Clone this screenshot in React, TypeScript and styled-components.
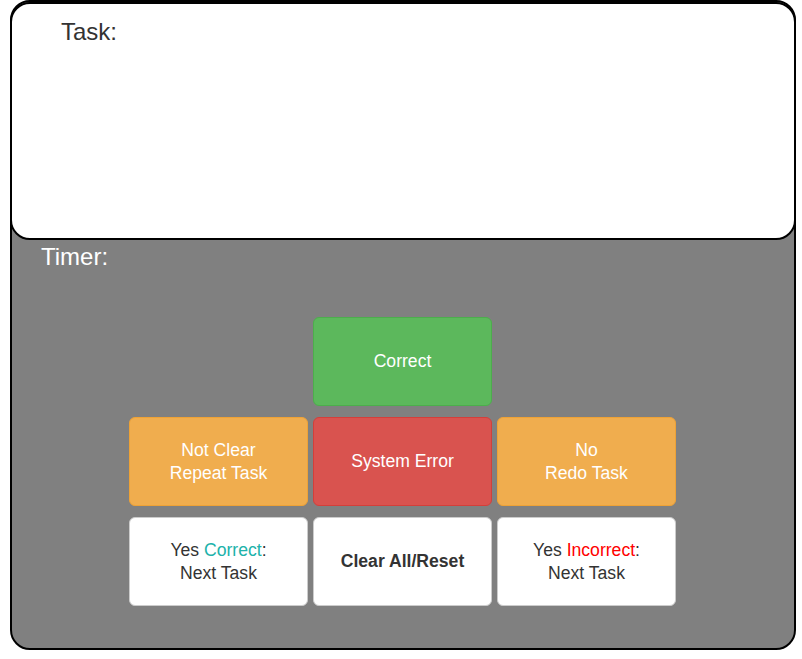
import React from "react";
import styled, { createGlobalStyle, css } from "styled-components";

const Global = createGlobalStyle`
  html, body { margin: 0; padding: 0; background: #fff; }
  body { font-family: "Liberation Sans", Arial, sans-serif; }
`;

const Frame = styled.div`
  box-sizing: border-box;
  margin-left: 10px;
  width: 786px;
  height: 650px;
  border: 2px solid #000;
  border-radius: 20px;
  background: #808080;
  display: flex;
  flex-direction: column;
`;

const TaskBox = styled.div`
  box-sizing: border-box;
  margin: 0 -2px;
  height: 238px;
  border: 2px solid #000;
  border-radius: 20px;
  background: #fff;
  padding: 14px 0 0 49px;
`;

const Label = styled.div<{ $light?: boolean }>`
  font-size: 24px;
  line-height: 27px;
  color: ${(p) => (p.$light ? "#fff" : "#333")};
`;

const TimerRow = styled.div`
  margin-top: 3px;
  padding-left: 29px;
`;

const Grid = styled.div`
  margin: 47px 0 0 117px;
  display: grid;
  grid-template-columns: repeat(3, 179px);
  grid-auto-rows: 89px;
  column-gap: 5px;
  row-gap: 11px;
`;

type Variant = "success" | "warning" | "danger" | "default";

const variants: Record<Variant, ReturnType<typeof css>> = {
  success: css`
    background: #5cb85c;
    border-color: #4cae4c;
    color: #fff;
  `,
  warning: css`
    background: #f0ad4e;
    border-color: #eea236;
    color: #fff;
  `,
  danger: css`
    background: #d9534f;
    border-color: #d43f3a;
    color: #fff;
  `,
  default: css`
    background: #fff;
    border-color: #ccc;
    color: #333;
  `,
};

const Btn = styled.button<{ $variant: Variant; $col?: number; $bold?: boolean }>`
  box-sizing: border-box;
  grid-column: ${(p) => p.$col ?? "auto"};
  border: 1px solid;
  border-radius: 6px;
  font-family: "Liberation Sans", Arial, sans-serif;
  font-size: 17.6px;
  line-height: 23px;
  font-weight: ${(p) => (p.$bold ? 700 : 400)};
  text-align: center;
  padding: 0 8px;
  cursor: pointer;
  ${(p) => variants[p.$variant]}
`;

const Teal = styled.span`
  color: #20b2aa;
`;
const Red = styled.span`
  color: #ff0000;
`;

export default function App() {
  return (
    <>
      <Global />
      <Frame>
        <TaskBox>
          <Label>Task:</Label>
        </TaskBox>
        <TimerRow>
          <Label $light>Timer:</Label>
        </TimerRow>
        <Grid>
          <Btn $variant="success" $col={2}>Correct</Btn>
          <Btn $variant="warning" $col={1}>
            Not Clear
            <br />
            Repeat Task
          </Btn>
          <Btn $variant="danger">System Error</Btn>
          <Btn $variant="warning">
            No
            <br />
            Redo Task
          </Btn>
          <Btn $variant="default">
            Yes <Teal>Correct</Teal>:
            <br />
            Next Task
          </Btn>
          <Btn $variant="default" $bold>Clear All/Reset</Btn>
          <Btn $variant="default">
            Yes <Red>Incorrect</Red>:
            <br />
            Next Task
          </Btn>
        </Grid>
      </Frame>
    </>
  );
}
